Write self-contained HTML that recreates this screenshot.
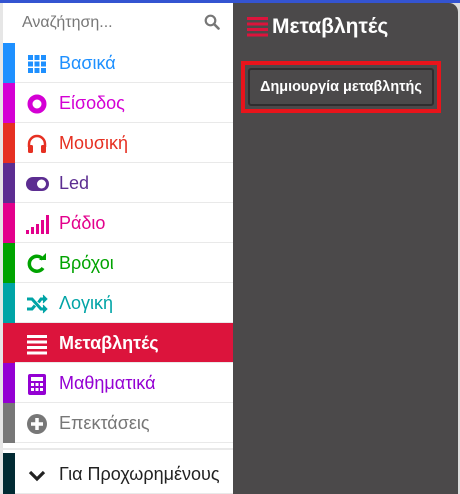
<!DOCTYPE html>
<html><head><meta charset="utf-8"><style>
*{margin:0;padding:0;box-sizing:border-box}
body{width:460px;height:494px;overflow:hidden;background:#ddd;font-family:"Liberation Sans","DejaVu Sans",sans-serif;position:relative}
.top{position:absolute;left:0;top:0;width:460px;height:3px;background:#3454d1}
.left{position:absolute;left:0;top:3px;width:233px;height:491px;background:#fff;border-left:3px solid #e6e6e6}
.search{position:absolute;left:19px;top:11px;font-size:16px;color:#777}
.row{position:absolute;left:0;width:230px;height:40px;border-bottom:1px solid #e9e9e9}
.row .c{position:absolute;left:0;top:0;width:12px;height:40px}
.row .t{position:absolute;left:56px;top:10px;font-size:18px}
.row svg{position:absolute;left:22px;top:9px}
.fly{position:absolute;left:233px;top:3px;width:225px;height:491px;background:#4b494a;border-top-right-radius:9px}
.hdr{position:absolute;left:39px;top:12px;font-size:21px;font-weight:bold;color:#fff}
.red{position:absolute;left:8px;top:58px;width:200px;height:52px;border:4px solid #e8141b}
.btn{position:absolute;left:3px;top:3px;width:186px;height:38px;background:#4b494a;border:2px solid #2f2d2e;border-radius:3px;color:#fff;font-weight:bold;font-size:14.4px;text-align:center;line-height:34px;white-space:nowrap}
</style></head><body>
<div class="top"></div>
<div class="left">
<div class="search">Αναζήτηση...</div>
<svg style="position:absolute;left:201px;top:11px" width="16" height="16" viewBox="0 0 16 16"><circle cx="6.5" cy="6.5" r="4.8" fill="none" stroke="#777" stroke-width="2.2"/><path d="M10 10l4.5 4.5" stroke="#777" stroke-width="2.6" stroke-linecap="round"/></svg>

<div class="row" style="top:40px"><div class="c" style="background:#1e90ff"></div>
<svg width="24" height="24" viewBox="0 0 24 24" fill="#1e90ff"><rect x="3" y="3" width="5" height="5"/><rect x="9.5" y="3" width="5" height="5"/><rect x="16" y="3" width="5" height="5"/><rect x="3" y="9.5" width="5" height="5"/><rect x="9.5" y="9.5" width="5" height="5"/><rect x="16" y="9.5" width="5" height="5"/><rect x="3" y="16" width="5" height="5"/><rect x="9.5" y="16" width="5" height="5"/><rect x="16" y="16" width="5" height="5"/></svg>
<div class="t" style="color:#1e90ff">Βασικά</div></div>

<div class="row" style="top:80px"><div class="c" style="background:#d400d4"></div>
<svg width="24" height="24" viewBox="0 0 24 24"><circle cx="12" cy="12" r="7" fill="none" stroke="#d400d4" stroke-width="5"/></svg>
<div class="t" style="color:#d400d4">Είσοδος</div></div>

<div class="row" style="top:120px"><div class="c" style="background:#e63022"></div>
<svg width="24" height="24" viewBox="0 0 24 24"><path d="M4 15v-3a8 8 0 0 1 16 0v3" fill="none" stroke="#e63022" stroke-width="2.5"/><rect x="3" y="13" width="5" height="8" rx="1.5" fill="#e63022"/><rect x="16" y="13" width="5" height="8" rx="1.5" fill="#e63022"/></svg>
<div class="t" style="color:#e63022">Μουσική</div></div>

<div class="row" style="top:160px"><div class="c" style="background:#5c2d91"></div>
<svg width="24" height="24" viewBox="0 0 24 24"><rect x="1" y="5" width="23" height="14" rx="7" fill="#5c2d91"/><circle cx="16.5" cy="12" r="4.5" fill="#fff"/></svg>
<div class="t" style="color:#5c2d91">Led</div></div>

<div class="row" style="top:200px"><div class="c" style="background:#e3008c"></div>
<svg width="24" height="24" viewBox="0 0 24 24" fill="#e3008c"><rect x="1" y="18" width="3" height="4"/><rect x="6" y="15" width="3" height="7"/><rect x="11" y="12" width="3" height="10"/><rect x="16" y="8" width="3" height="14"/><rect x="21" y="3" width="3" height="19"/></svg>
<div class="t" style="color:#e3008c">Ράδιο</div></div>

<div class="row" style="top:240px"><div class="c" style="background:#00a300"></div>
<svg width="24" height="24" viewBox="0 0 24 24"><path d="M18 16a7.5 7.5 0 1 1 0-8.5" fill="none" stroke="#00a300" stroke-width="3.5"/><path d="M14 8h7V1z" fill="#00a300"/></svg>
<div class="t" style="color:#00a300">Βρόχοι</div></div>

<div class="row" style="top:280px"><div class="c" style="background:#00a4a6"></div>
<svg width="24" height="24" viewBox="0 0 24 24" fill="none" stroke="#00a4a6" stroke-width="3"><path d="M2 7h5l9 10h3M2 17h5l3-3.5M13.5 10.5L16 7h3"/><path d="M18 3l4 4-4 4M18 13l4 4-4 4" fill="#00a4a6" stroke-width="1"/></svg>
<div class="t" style="color:#00a4a6">Λογική</div></div>

<div class="row" style="top:320px;background:#dc143c;width:230px"><div class="c" style="background:#dc143c"></div>
<svg width="24" height="24" viewBox="0 0 24 24" fill="#fff"><rect x="2" y="3" width="20" height="3"/><rect x="2" y="8.5" width="20" height="3"/><rect x="2" y="14" width="20" height="3"/><rect x="2" y="19.5" width="20" height="3"/></svg>
<div class="t" style="color:#fff;font-weight:bold">Μεταβλητές</div></div>

<div class="row" style="top:360px"><div class="c" style="background:#9400d3"></div>
<svg width="24" height="24" viewBox="0 0 24 24"><rect x="3" y="2" width="18" height="21" rx="2" fill="#9400d3"/><rect x="6" y="5" width="12" height="4" fill="#fff"/><g fill="#fff"><rect x="6" y="11" width="3" height="3"/><rect x="10.5" y="11" width="3" height="3"/><rect x="15" y="11" width="3" height="3"/><rect x="6" y="16" width="3" height="3"/><rect x="10.5" y="16" width="3" height="3"/><rect x="15" y="16" width="3" height="3"/></g></svg>
<div class="t" style="color:#9400d3">Μαθηματικά</div></div>

<div class="row" style="top:400px"><div class="c" style="background:#777"></div>
<svg width="24" height="24" viewBox="0 0 24 24"><circle cx="12" cy="12" r="10" fill="#777"/><path d="M12 6v12M6 12h12" stroke="#fff" stroke-width="3.5"/></svg>
<div class="t" style="color:#777">Επεκτάσεις</div></div>

<div style="position:absolute;left:-3px;top:445px;width:233px;height:2px;background:#e9e9e9"></div>
<div class="row" style="top:450px;height:41px"><div class="c" style="background:#022b33;height:41px"></div>
<svg width="24" height="24" viewBox="0 0 24 24" style="top:11px"><path d="M5 8l7 7 7-7" fill="none" stroke="#222" stroke-width="3.2"/></svg>
<div class="t" style="color:#222;top:11px">Για Προχωρημένους</div></div>
</div>

<div class="fly">
<svg style="position:absolute;left:14px;top:13px" width="21" height="21" viewBox="0 0 21 21" fill="#dc143c"><rect x="0" y="1" width="21" height="3"/><rect x="0" y="6.5" width="21" height="3"/><rect x="0" y="12" width="21" height="3"/><rect x="0" y="17.5" width="21" height="3"/></svg>
<div class="hdr">Μεταβλητές</div>
<div class="red"><div class="btn">Δημιουργία μεταβλητής</div></div>
</div>
</body></html>
